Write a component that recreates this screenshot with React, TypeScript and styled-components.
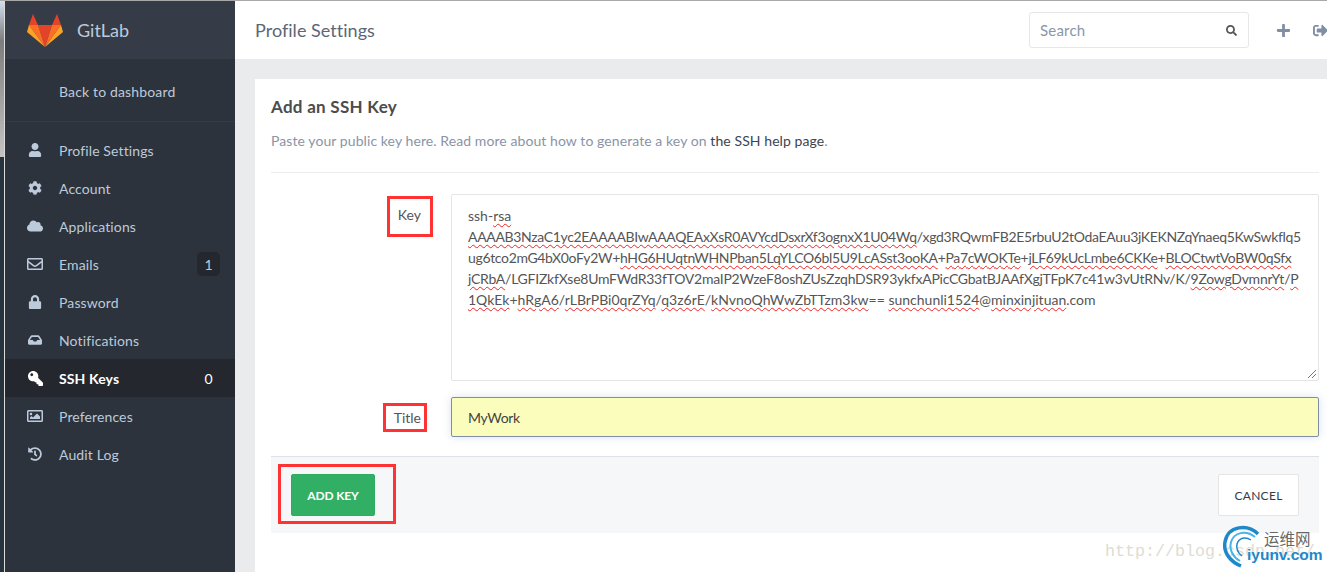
import type { ReactNode } from "react";
import styled, { createGlobalStyle } from "styled-components";
import {
  FaCloud,
  FaCog,
  FaHistory,
  FaInbox,
  FaKey,
  FaLock,
  FaPlus,
  FaRegEnvelope,
  FaRegImage,
  FaSearch,
  FaSignOutAlt,
  FaUser,
} from "react-icons/fa";

const GlobalStyle = createGlobalStyle`
  html, body {
    margin: 0;
    padding: 0;
    height: 100%;
    overflow: hidden;
    background: #fff;
    font-family: "Lato", "Noto Sans", sans-serif;
  }
  * { box-sizing: border-box; }
  a { text-decoration: none; }
`;

const Page = styled.div`
  position: relative;
  display: flex;
  width: 1327px;
  height: 572px;
  overflow: hidden;
  border-top: 1px solid #a8a8a8;
`;

const Edge = styled.div`
  width: 5px;
  flex: none;
  background: linear-gradient(#cfe0f0 0, #7d7d7d 40px, #c4c4c4 156px, #26323c 156px);
  border-right: 1px solid #dcdcdc;
`;

const Sidebar = styled.aside`
  width: 230px;
  flex: none;
  background: #2d333c;
  color: #bccadb;
`;

const Brand = styled.div`
  height: 58px;
  display: flex;
  align-items: center;
  gap: 14px;
  padding-left: 22px;
  background: #353c47;
  font-size: 18px;
`;

const Back = styled.a`
  display: flex;
  align-items: center;
  height: 63px;
  padding: 2px 0 0 54px;
  font-size: 14px;
  letter-spacing: 0.15px;
  color: #bccadb;
  border-bottom: 1px solid #353b45;
`;

const Nav = styled.nav`
  margin-top: 9px;
`;

const NavRow = styled.a<{ $active?: boolean }>`
  display: flex;
  align-items: center;
  height: 38px;
  padding: 0 15px 0 22px;
  font-size: 14px;
  letter-spacing: 0.12px;
  background: ${(p) => (p.$active ? "#24272d" : "transparent")};
  color: ${(p) => (p.$active ? "#fff" : "#bccadb")};
  font-weight: ${(p) => (p.$active ? 700 : 400)};
`;

const NavIcon = styled.span<{ $flip?: boolean; $size: number }>`
  width: 16px;
  margin-right: 16px;
  flex: none;
  display: flex;
  align-items: center;
  justify-content: center;

  svg {
    width: ${(p) => p.$size}px;
    height: ${(p) => p.$size}px;
    transform: ${(p) => (p.$flip ? "scaleX(-1)" : "none")};
  }
`;

const NavLabel = styled.span`
  flex: 1;
`;

const Count = styled.span<{ $plain?: boolean }>`
  width: 23px;
  height: 24px;
  display: flex;
  align-items: center;
  justify-content: center;
  border-radius: 5px;
  font-weight: 400;
  background: ${(p) => (p.$plain ? "transparent" : "#24272d")};
`;

const Main = styled.main`
  flex: 1;
  min-width: 0;
  display: flex;
  flex-direction: column;
  background: #eaebed;
`;

const Header = styled.header`
  height: 58px;
  flex: none;
  display: flex;
  align-items: center;
  padding-left: 20px;
  background: #fff;
  white-space: nowrap;
`;

const PageTitle = styled.h1`
  flex: 1;
  margin: 0;
  font-size: 18px;
  font-weight: 400;
  letter-spacing: 0.03px;
  color: #5c6675;
`;

const SearchBox = styled.div`
  width: 220px;
  height: 36px;
  display: flex;
  align-items: center;
  justify-content: space-between;
  padding: 0 11px 0 10px;
  border: 1px solid #e6e7e9;
  border-radius: 3px;
  font-size: 15px;
  letter-spacing: 0.2px;
  color: #8a96a8;

  svg {
    width: 11px;
    height: 11px;
    color: #555;
  }
`;

const HeaderIcons = styled.div`
  width: 78px;
  flex: none;
  display: flex;
  align-items: center;
  gap: 22px;
  padding-left: 27px;
  color: #7f8ea3;
  font-size: 15px;
  overflow: hidden;

  svg {
    flex: none;
  }
`;

const Card = styled.section`
  flex: 1;
  min-width: 0;
  margin: 20px 0 0 20px;
  padding: 16px 8px 0 16px;
  background: #fff;
`;

const CardTitle = styled.h3`
  margin: 0;
  height: 24px;
  line-height: 24px;
  font-size: 17px;
  font-weight: 700;
  letter-spacing: 0.28px;
  color: #4c4c4c;
`;

const Intro = styled.p`
  margin: 12px 0 0;
  padding-bottom: 21px;
  line-height: 20px;
  font-size: 14px;
  letter-spacing: 0.08px;
  color: #8a94a6;
  border-bottom: 1px solid #ececec;

  a {
    color: #3b4452;
  }
`;

const FormRow = styled.div<{ $top: number }>`
  display: flex;
  margin-top: ${(p) => p.$top}px;
`;

const LabelCol = styled.div`
  width: 150px;
  flex: none;
  padding-top: 12px;
  text-align: right;
  font-size: 14px;
  line-height: 18px;
  color: #555;
`;

const LabelText = styled.label`
  position: relative;
  display: inline-block;
`;

const RedBox = styled.span<{ $l: number; $t: number; $w: number; $h: number }>`
  position: absolute;
  left: ${(p) => p.$l}px;
  top: ${(p) => p.$t}px;
  width: ${(p) => p.$w}px;
  height: ${(p) => p.$h}px;
  border: 3px solid #f33;
  pointer-events: none;
`;

const KeyArea = styled.div`
  position: relative;
  margin-left: 30px;
  flex: 1;
  min-width: 0;
  height: 187px;
  padding: 10px 16px;
  border: 1px solid #e5e5e5;
  border-radius: 2px;
  font-size: 14px;
  line-height: 21px;
  color: #555;
  white-space: nowrap;
`;

const KeyLine = styled.div<{ $track?: number }>`
  letter-spacing: ${(p) => p.$track ?? 0}px;
`;

const Misspelled = styled.span`
  text-decoration: underline wavy #e22;
  text-decoration-thickness: 1px;
  text-underline-offset: 2px;
`;

const Grip = styled.svg`
  position: absolute;
  right: 1px;
  bottom: 1px;
  width: 10px;
  height: 10px;
`;

const TitleInput = styled.div`
  margin-left: 30px;
  flex: 1;
  min-width: 0;
  height: 40px;
  display: flex;
  align-items: center;
  padding: 0 16px;
  background: #fbfdbd;
  border: 1px solid #7f8ea6;
  border-radius: 2px;
  box-shadow: 0 0 8px rgba(110, 140, 190, 0.25);
  font-size: 14px;
  letter-spacing: -0.3px;
  color: #444;
`;

const Actions = styled.div`
  position: relative;
  height: 77px;
  margin-top: 19px;
  display: flex;
  align-items: center;
  justify-content: space-between;
  padding: 0 20px;
  background: #f6f7f9;
  border-top: 1px solid #dfe1e8;
`;

const ActionButton = styled.button<{ $primary?: boolean }>`
  position: relative;
  height: 42px;
  padding: 0;
  width: ${(p) => (p.$primary ? 84 : 81)}px;
  border: 1px solid ${(p) => (p.$primary ? "#2faa60" : "#e5e5e5")};
  border-radius: 2px;
  background: ${(p) => (p.$primary ? "#31af64" : "#fff")};
  color: ${(p) => (p.$primary ? "#fff" : "#333c48")};
  font-family: inherit;
  font-size: 12px;
  font-weight: ${(p) => (p.$primary ? 700 : 400)};
  letter-spacing: ${(p) => (p.$primary ? -0.15 : 0.3)}px;
`;

const Watermark = styled.div`
  position: absolute;
  left: 1105px;
  top: 541px;
  font-family: "Liberation Mono", monospace;
  font-size: 16.67px;
  line-height: 20px;
  color: #dedcd4;
  white-space: nowrap;
`;

const Badge = styled.div`
  position: absolute;
  left: 1222px;
  top: 523px;
  width: 105px;
  height: 49px;
`;

const BadgeName = styled.span`
  position: absolute;
  left: 42px;
  top: 5px;
  font-family: "Noto Sans CJK SC", sans-serif;
  font-size: 15.5px;
  line-height: 18px;
  color: #666;
`;

const BadgeDomain = styled.span`
  position: absolute;
  left: 25px;
  top: 22px;
  font-family: "Liberation Sans", sans-serif;
  font-size: 15.5px;
  line-height: 18px;
  font-weight: 700;
  color: #1e88c9;
`;

const GitLabLogo = () => (
  <svg width="36" height="33" viewBox="0 0 36 33">
    <polygon points="18,33 11,11 25,11" fill="#e24329" />
    <polygon points="18,33 11,11 2,11" fill="#fc6d26" />
    <polygon points="18,33 25,11 34,11" fill="#fc6d26" />
    <polygon points="2,11 0,18 18,33" fill="#fca326" />
    <polygon points="34,11 36,18 18,33" fill="#fca326" />
    <polygon points="2,11 6,0 11,11" fill="#e24329" />
    <polygon points="34,11 30,0 25,11" fill="#e24329" />
  </svg>
);

type NavItem = {
  icon: ReactNode;
  size: number;
  label: string;
  count?: string;
  active?: boolean;
  flip?: boolean;
};

const navItems: NavItem[] = [
  { icon: <FaUser />, size: 14, label: "Profile Settings" },
  { icon: <FaCog />, size: 14, label: "Account" },
  { icon: <FaCloud />, size: 16, label: "Applications" },
  { icon: <FaRegEnvelope />, size: 16, label: "Emails", count: "1" },
  { icon: <FaLock />, size: 14, label: "Password" },
  { icon: <FaInbox />, size: 14, label: "Notifications" },
  { icon: <FaKey />, size: 15, label: "SSH Keys", count: "0", active: true, flip: true },
  { icon: <FaRegImage />, size: 16, label: "Preferences" },
  { icon: <FaHistory />, size: 14, label: "Audit Log" },
];

export default function App() {
  return (
    <>
      <GlobalStyle />
      <Page>
        <Edge />
        <Sidebar>
          <Brand>
            <GitLabLogo />
            GitLab
          </Brand>
          <Back href="#">Back to dashboard</Back>
          <Nav>
            {navItems.map((item) => (
              <NavRow key={item.label} href="#" $active={item.active}>
                <NavIcon $flip={item.flip} $size={item.size}>
                  {item.icon}
                </NavIcon>
                <NavLabel>{item.label}</NavLabel>
                {item.count && <Count $plain={item.active}>{item.count}</Count>}
              </NavRow>
            ))}
          </Nav>
        </Sidebar>
        <Main>
          <Header>
            <PageTitle>Profile Settings</PageTitle>
            <SearchBox>
              Search
              <FaSearch />
            </SearchBox>
            <HeaderIcons>
              <FaPlus />
              <FaSignOutAlt />
            </HeaderIcons>
          </Header>
          <Card>
            <CardTitle>Add an SSH Key</CardTitle>
            <Intro>
              Paste your public key here. Read more about how to generate a key on <a>the SSH help page</a>.
            </Intro>
            <FormRow $top={21}>
              <LabelCol>
                <LabelText>
                  Key
                  <RedBox $l={-11} $t={-10} $w={46} $h={41} />
                </LabelText>
              </LabelCol>
              <KeyArea>
                <KeyLine>
                  ssh-<Misspelled>rsa</Misspelled>
                </KeyLine>
                <KeyLine $track={-0.34}>
                  <Misspelled>AAAAB3NzaC1yc2EAAAABIwAAAQEAxXsR0AVYcdDsxrXf3ognxX1U04Wq</Misspelled>/xgd3RQwmFB2E5rbuU2tOdaEAuu3jKEKNZqYnaeq5KwSwkflq5
                </KeyLine>
                <KeyLine $track={-0.34}>
                  ug6tco2mG4bX0oFy2W+<Misspelled>hHG6HUqtnWHNPban5LqYLCO6bl5U9LcASst3ooKA</Misspelled>+<Misspelled>Pa7cWOKTe</Misspelled>+<Misspelled>jLF69kUcLmbe6CKKe</Misspelled>+<Misspelled>BLOCtwtVoBW0qSfx</Misspelled>
                </KeyLine>
                <KeyLine $track={-0.26}>
                  <Misspelled>jCRbA</Misspelled>/LGFIZkfXse8UmFWdR33fTOV2maIP2WzeF8oshZUsZzqhDSR93ykfxAPicCGbatBJAAfXgjTFpK7c41w3vUtRNv/K/<Misspelled>9ZowgDvmnrYt</Misspelled>/<Misspelled>P</Misspelled>
                </KeyLine>
                <KeyLine>
                  <Misspelled>1QkEk</Misspelled>+<Misspelled>hRgA6</Misspelled>/<Misspelled>rLBrPBi0qrZYq</Misspelled>/<Misspelled>q3z6rE</Misspelled>/<Misspelled>kNvnoQhWwZbTTzm3kw</Misspelled>== <Misspelled>sunchunli1524</Misspelled>@<Misspelled>minxinjituan</Misspelled>.com
                </KeyLine>
                <Grip viewBox="0 0 10 10">
                  <path d="M1 9 9 1M5 9 9 5" stroke="#777" strokeWidth="1" fill="none" />
                </Grip>
              </KeyArea>
            </FormRow>
            <FormRow $top={16}>
              <LabelCol>
                <LabelText>
                  Title
                  <RedBox $l={-11} $t={-6} $w={44} $h={29} />
                </LabelText>
              </LabelCol>
              <TitleInput>MyWork</TitleInput>
            </FormRow>
            <Actions>
              <ActionButton $primary>
                ADD KEY
                <RedBox $l={-14} $t={-11} $w={118} $h={60} />
              </ActionButton>
              <ActionButton>CANCEL</ActionButton>
            </Actions>
          </Card>
        </Main>
        <Watermark>http://blog.csdn.net/</Watermark>
        <Badge>
          <svg width="40" height="44" viewBox="0 0 40 44">
            <path d="M36 10C26 0 6 1 3 18c-2 11 6 20 16 24" stroke="#1e88c9" strokeWidth="3.5" fill="none" />
            <path d="M33 13C24 6 12 8 9 18c-2 8 2 15 9 19" stroke="#49b4e6" strokeWidth="2" fill="none" />
            <path d="M29 16C23 12 17 14 15 20c-1 5 1 9 5 12" stroke="#1e88c9" strokeWidth="1.5" fill="none" />
          </svg>
          <BadgeName>运维网</BadgeName>
          <BadgeDomain>iyunv.com</BadgeDomain>
        </Badge>
      </Page>
    </>
  );
}
